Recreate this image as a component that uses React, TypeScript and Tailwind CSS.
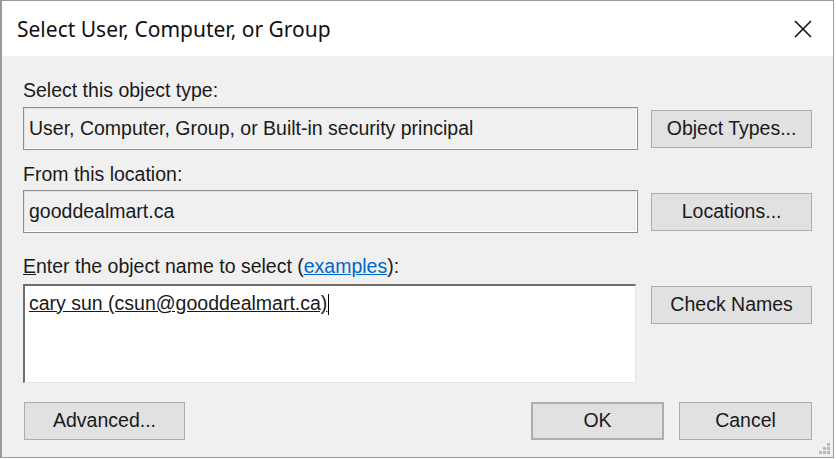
import React from 'react'

const btn =
  'flex items-center justify-center bg-[#e1e1e1] border border-[#adadad] text-[19.5px] text-[#1a1a1a] leading-none'

function Field({ value }: { value: string }) {
  return (
    <div className="w-[616px] h-[43px] flex items-center pl-[5px] border border-[#8e8e8e] shadow-[inset_-1px_-1px_0_#ffffff,inset_1px_1px_0_#e3e3e3] bg-[#f0f0f0] text-[19.5px] text-[#1a1a1a]">
      {value}
    </div>
  )
}

export default function App() {
  return (
    <div className="w-[836px] h-[459px] bg-white" style={{ fontFamily: '"Liberation Sans", Arial, sans-serif' }}>
      <div className="w-[834px] h-[458px] border border-[#9a9a9a] border-l-2 flex flex-col bg-[#f0f0f0]">
        {/* title bar */}
        <div className="h-[55px] bg-white flex items-center justify-between pl-[15px] pr-[20px] shrink-0">
          <span className="text-[21px] text-[#111] pt-[3px]" style={{ fontFamily: '"Noto Sans", "Open Sans", sans-serif' }}>
            Select User, Computer, or Group
          </span>
          <svg width="18" height="18" viewBox="0 0 18 18" className="mr-[1px]">
            <path d="M1 1 L17 17 M17 1 L1 17" stroke="#111" strokeWidth="1.6" />
          </svg>
        </div>

        {/* body */}
        <div className="flex flex-col pl-[21px] pr-[21px] pt-[23px]">
          <div className="text-[19.5px] leading-[22px] text-[#1a1a1a]">Select this object type:</div>
          <div className="flex items-center gap-[13px] mt-[6px]">
            <Field value="User, Computer, Group, or Built-in security principal" />
            <div className={`${btn} w-[161px] h-[38px]`}>Object Types...</div>
          </div>

          <div className="text-[19.5px] leading-[22px] text-[#1a1a1a] mt-[13px]">From this location:</div>
          <div className="flex items-center gap-[13px] mt-[5px]">
            <Field value="gooddealmart.ca" />
            <div className={`${btn} w-[161px] h-[38px]`}>Locations...</div>
          </div>

          <div className="text-[19.5px] leading-[22px] text-[#1a1a1a] mt-[22px]">
            <span className="underline">E</span>nter the object name to select (
            <span className="text-[#0066cc] underline">examples</span>):
          </div>
          <div className="flex items-start gap-[15px] mt-[7px]">
            <div className="w-[614px] h-[99px] bg-white border-t-2 border-l-2 border-[#6e6e6e] border-r border-b border-r-[#e3e3e3] border-b-[#e3e3e3] pl-[4px] pt-[6px] text-[19.5px] text-[#1a1a1a] leading-[22px]">
              <span className="underline">cary sun (csun@gooddealmart.ca)</span>
              <span className="inline-block w-[1px] h-[21px] bg-black align-middle ml-[1px]" />
            </div>
            <div className={`${btn} w-[161px] h-[38px] mt-[2px]`}>Check Names</div>
          </div>

          <div className="flex items-center mt-[19px]">
            <div className={`${btn} w-[161px] h-[38px] ml-[1px]`}>Advanced...</div>
            <div className="flex-1" />
            <div className={`${btn} w-[133px] h-[38px] border-2 border-[#0078d7]`}>OK</div>
            <div className={`${btn} w-[133px] h-[38px] ml-[15px]`}>Cancel</div>
          </div>
        </div>

        {/* resize grip */}
        <div className="flex-1 flex items-end justify-end pr-[2px] pb-[2px]">
          <svg width="12" height="12" viewBox="0 0 12 12">
            <g fill="#b8b8b8">
              <rect x="8" y="0" width="3" height="3" />
              <rect x="4" y="4" width="3" height="3" />
              <rect x="8" y="4" width="3" height="3" />
              <rect x="0" y="8" width="3" height="3" />
              <rect x="4" y="8" width="3" height="3" />
              <rect x="8" y="8" width="3" height="3" />
            </g>
          </svg>
        </div>
      </div>
    </div>
  )
}
